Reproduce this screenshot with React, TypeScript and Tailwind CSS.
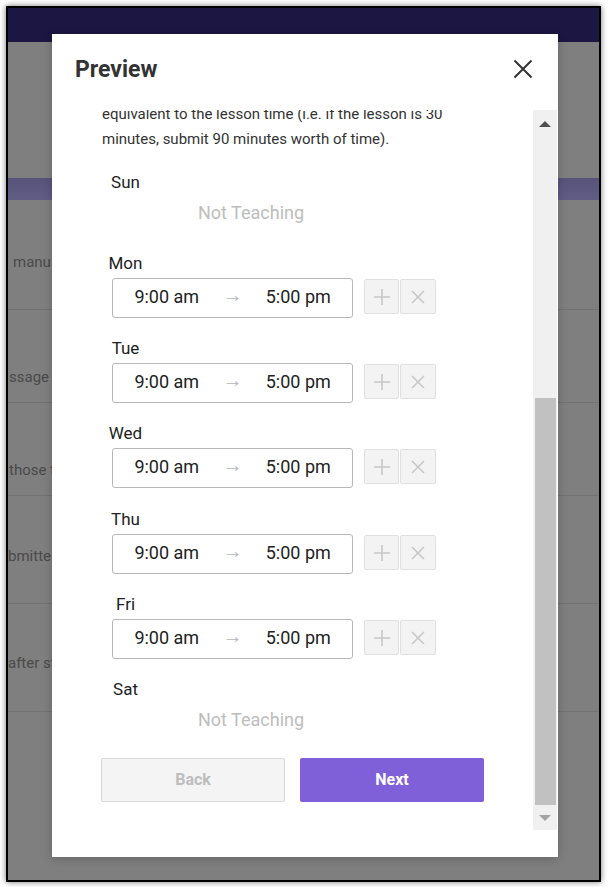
import React from "react";

const font = { fontFamily: "Roboto, 'Noto Sans', Arial, sans-serif" };

function CloseIcon() {
  return (
    <svg width="20" height="20" viewBox="0 0 20 20" className="-mt-[2px]">
      <path d="M1.5 1.5 L18.5 18.5 M18.5 1.5 L1.5 18.5" stroke="#333" strokeWidth="2" strokeLinecap="butt" fill="none" />
    </svg>
  );
}

function PlusIcon() {
  return (
    <svg width="18" height="18" viewBox="0 0 18 18">
      <path d="M9 1 V17 M1 9 H17" stroke="#c6c6c6" strokeWidth="1.6" fill="none" />
    </svg>
  );
}

function XIcon() {
  return (
    <svg width="14" height="14" viewBox="0 0 14 14">
      <path d="M1 1 L13 13 M13 1 L1 13" stroke="#c6c6c6" strokeWidth="1.5" fill="none" />
    </svg>
  );
}

function DayLabel({ name }: { name: string }) {
  return <div className="w-[49px] text-center text-[17px] leading-[20px] text-[#222]">{name}</div>;
}

function NotTeaching({ mt }: { mt: string }) {
  return <div className={`${mt} pl-[97px] text-[18px] leading-[24px] text-[#bdbdbd]`}>Not Teaching</div>;
}

function TeachingDay({ name, mt }: { name: string; mt: string }) {
  return (
    <div className={mt}>
      <DayLabel name={name} />
      <div className="mt-[5px] flex items-start">
        <div className="ml-[11px] grid h-[40px] w-[241px] grid-cols-[1fr_24px_1fr] items-center rounded-[3px] border border-[#b8b8b8] pb-[3px] text-[18px] text-[#222]">
          <span className="text-center">9:00 am</span>
          <span className="pb-[4px] text-center text-[20px] leading-[20px] text-[#b5b5b5]">→</span>
          <span className="text-center">5:00 pm</span>
        </div>
        <div className="ml-[11px] mt-px flex gap-px">
          <div className="flex h-[35px] w-[35px] items-center justify-center rounded-[2px] border border-[#e0e0e0] bg-[#f3f3f3]">
            <PlusIcon />
          </div>
          <div className="flex h-[35px] w-[36px] items-center justify-center rounded-[2px] border border-[#e0e0e0] bg-[#f3f3f3]">
            <XIcon />
          </div>
        </div>
      </div>
    </div>
  );
}

export default function App() {
  return (
    <div className="h-[887px] w-[608px] overflow-hidden bg-white pl-[6px] pt-[6px]" style={font}>
      <div className="relative h-[876px] w-[595px] overflow-hidden border-2 border-black shadow-[0_0_6px_rgba(0,0,0,0.55)]">
        {/* page under overlay */}
        <div className="flex h-full flex-col bg-[#7f7f7f] text-[15px] text-[#4a4a4a]">
          <div className="h-[34px] bg-[#1b1642]" />
          <div className="h-[136px]" />
          <div className="h-[22px] bg-gradient-to-b from-[#57527a] to-[#625d85]" />
          <div className="h-[110px] border-b border-[#727272] pl-[5px] pt-[52px] leading-[20px]">manu</div>
          <div className="h-[93px] border-b border-[#727272] pl-px pt-[57px] leading-[20px]">ssage t</div>
          <div className="h-[93px] border-b border-[#727272] pl-[1px] pt-[57px] leading-[20px]">those t</div>
          <div className="h-[108px] border-b border-[#727272] pt-[50px] leading-[20px]">bmitte</div>
          <div className="h-[108px] border-b border-[#727272] pt-[49px] leading-[20px]">after st</div>
        </div>

        {/* modal */}
        <div className="absolute left-[44px] top-[26px] flex h-[823px] w-[506px] flex-col bg-white shadow-[0_2px_10px_rgba(0,0,0,0.2)]">
          <div className="flex h-[76px] items-center justify-between pb-[4px] pl-[23px] pr-[25px]">
            <div className="text-[23px] font-bold text-[#333]">Preview</div>
            <CloseIcon />
          </div>
          <div className="flex h-[720px]">
            <div className="w-[481px] overflow-hidden pl-[49px]">
              <div className="-mt-[8px] w-[383px] pl-px text-[15px] leading-[25px] text-[#333]">
                equivalent to the lesson time (i.e. if the lesson is 30
                <br />
                minutes, submit 90 minutes worth of time).
              </div>
              <div className="mt-[20px]">
                <DayLabel name="Sun" />
                <NotTeaching mt="mt-[9px]" />
              </div>
              <TeachingDay name="Mon" mt="mt-[28px]" />
              <TeachingDay name="Tue" mt="mt-[20px]" />
              <TeachingDay name="Wed" mt="mt-[20px]" />
              <TeachingDay name="Thu" mt="mt-[21px]" />
              <TeachingDay name="Fri" mt="mt-[20px]" />
              <div className="mt-[20px]">
                <DayLabel name="Sat" />
                <NotTeaching mt="mt-[9px]" />
              </div>
              <div className="mt-[26px] flex gap-[15px]">
                <div className="flex h-[44px] w-[184px] items-center justify-center rounded-[2px] border border-[#d9d9d9] bg-[#f4f4f4] text-[16px] font-bold text-[#bdbdbd]">
                  Back
                </div>
                <div className="flex h-[44px] w-[184px] items-center justify-center rounded-[2px] bg-[#7f60d9] text-[16px] font-bold text-white">
                  Next
                </div>
              </div>
            </div>
            {/* scrollbar */}
            <div className="flex w-[24px] flex-col bg-[#f0f0f0]">
              <div className="flex h-[25px] items-center justify-center pt-[2px]">
                <div className="h-0 w-0 border-x-[6px] border-b-[6px] border-x-transparent border-b-[#505050]" />
              </div>
              <div className="h-[263px]" />
              <div className="ml-[2px] mr-px h-[407px] bg-[#c1c1c1]" />
              <div className="flex h-[25px] items-center justify-center">
                <div className="h-0 w-0 border-x-[6px] border-t-[6px] border-x-transparent border-t-[#a3a3a3]" />
              </div>
            </div>
          </div>
        </div>
      </div>
    </div>
  );
}
